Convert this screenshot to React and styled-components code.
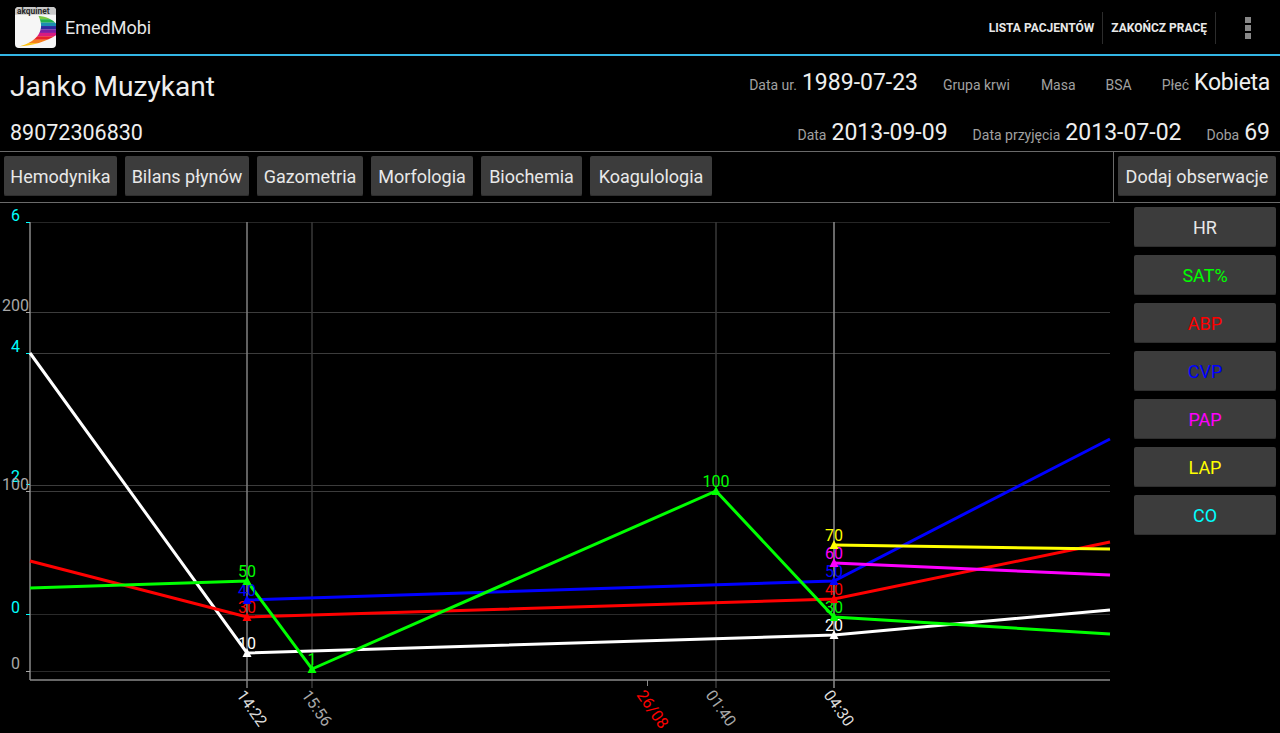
import styled, { createGlobalStyle } from "styled-components";

const GlobalStyle = createGlobalStyle`
  html, body { margin: 0; height: 100%; background: #000; }
  body { font-family: Roboto, "Liberation Sans", sans-serif; overflow: hidden; }
`;

const Page = styled.div`
  width: 1280px;
  height: 733px;
  display: flex;
  flex-direction: column;
  background: #000;
  color: #eee;
  overflow: hidden;
`;

const ActionBar = styled.header`
  height: 53px;
  flex: none;
  display: flex;
  align-items: center;
  border-bottom: 2px solid #33b5e5;
  padding: 1px 0 0 15px;
`;

const AppTitle = styled.span`
  font-size: 18px;
  color: #e8e8e8;
  margin-left: 9px;
  flex: 1;
`;

const ActionItem = styled.div`
  height: 32px;
  display: flex;
  align-items: center;
  padding: 0 8px;
  font-size: 12px;
  font-weight: 700;
  color: #e8e8e8;
  border-right: 1px solid #2c2c2c;
`;

const Overflow = styled.div`
  width: 64px;
  display: flex;
  flex-direction: column;
  align-items: center;
  gap: 2px;
  span { width: 6px; height: 6px; background: #888; }
`;

const Info = styled.section`
  height: 96px;
  flex: none;
  box-sizing: border-box;
  padding: 0 10px;
  display: grid;
  grid-template-rows: 60px 35px;
  border-bottom: 1px solid #6a6a6a;
`;

const InfoRow = styled.div`
  display: flex;
  justify-content: space-between;
  align-items: ${(p) => (p.$top ? "center" : "flex-start")};
`;

const Name = styled.h1`
  margin: 0;
  font-size: 28.1px;
  font-weight: 400;
  color: #eee;
`;

const Pesel = styled.div`
  font-size: 21.5px;
  color: #eee;
  line-height: 33px;
`;

const Fields = styled.div`
  display: flex;
  gap: ${(p) => p.$gap}px;
  align-items: baseline;
  margin-top: ${(p) => p.$shift}px;
`;

const Field = styled.div`
  font-size: 14px;
  color: #a0a0a0;
  margin-right: ${(p) => p.$after || 0}px;
`;

const Value = styled.span`
  font-size: 23px;
  color: #eee;
  margin-left: 5px;
  letter-spacing: ${(p) => (p.$word ? "-0.3px" : "0")};
`;

const TabRow = styled.nav`
  height: 51px;
  flex: none;
  box-sizing: border-box;
  display: flex;
  border-bottom: 1px solid #6a6a6a;
`;

const Tabs = styled.div`
  flex: 1;
  display: flex;
  align-items: flex-start;
  gap: 8px;
  padding: 4px 0 0 4px;
`;

const Btn = styled.button`
  height: 40px;
  width: ${(p) => p.$w}px;
  padding: 0;
  border: 0;
  border-radius: 2px;
  background: #3c3c3c;
  box-shadow: inset 0 -1px 0 #2e2e2e;
  font-family: inherit;
  font-size: 18px;
  color: ${(p) => p.$color || "#e8e8e8"};
`;

const AddCell = styled.div`
  width: 167px;
  box-sizing: border-box;
  border-left: 1px solid #6a6a6a;
  display: flex;
  align-items: flex-start;
  padding: 4px 0 0 4px;
`;

const Body = styled.main`
  flex: 1;
  display: flex;
  min-height: 0;
`;

const Chart = styled.svg`
  width: 1134px;
  height: 530px;
  flex: none;
  display: block;
  font-family: Roboto, "Liberation Sans", sans-serif;
`;

const Side = styled.aside`
  display: flex;
  flex-direction: column;
  gap: 8px;
  padding-top: 4px;
`;

const LEFT = 30;
const RIGHT = 1110;
const AXIS = 680;

const hLines = [
  { y: 222, c: "#262626" },
  { y: 312, c: "#3c3c3c" },
  { y: 353, c: "#3c3c3c" },
  { y: 485, c: "#3c3c3c" },
  { y: 491, c: "#3c3c3c" },
  { y: 614, c: "#2a2a2a" },
  { y: 671, c: "#2a2a2a" },
];

const vLines = [
  { x: 247, c: "#808080" },
  { x: 312, c: "#383838" },
  { x: 716, c: "#383838" },
  { x: 834, c: "#8c8c8c" },
];

const series = [
  { c: "#ffffff", pts: [[30, 353], [247, 653], [834, 635], [1110, 610]] },
  { c: "#ff0000", pts: [[30, 561], [247, 617], [834, 599], [1110, 542]] },
  { c: "#0000ff", pts: [[247, 600], [834, 581], [1110, 439]] },
  { c: "#00ff00", pts: [[30, 588], [247, 581], [312, 669], [716, 491], [834, 617], [1110, 634]] },
  { c: "#ff00ff", pts: [[834, 563], [1110, 575]] },
  { c: "#ffff00", pts: [[834, 545], [1110, 549]] },
];

const markers = [
  { x: 247, y: 653, c: "#ffffff", t: "10" },
  { x: 247, y: 617, c: "#ff0000", t: "30" },
  { x: 247, y: 600, c: "#0000ff", t: "40" },
  { x: 247, y: 581, c: "#00ff00", t: "50" },
  { x: 312, y: 669, c: "#00ff00", t: "1" },
  { x: 716, y: 491, c: "#00ff00", t: "100" },
  { x: 834, y: 635, c: "#ffffff", t: "20" },
  { x: 834, y: 617, c: "#00ff00", t: "30" },
  { x: 834, y: 599, c: "#ff0000", t: "40" },
  { x: 834, y: 581, c: "#0000ff", t: "50" },
  { x: 834, y: 563, c: "#ff00ff", t: "60" },
  { x: 834, y: 545, c: "#ffff00", t: "70" },
];

const yLabels = [
  { x: 11, y: 222, t: "6", c: "#00ffff", tick: 222 },
  { x: 2, y: 312, t: "200", c: "#a8a8a8", tick: 312 },
  { x: 11, y: 353, t: "4", c: "#00ffff", tick: 353 },
  { x: 11, y: 483, t: "2", c: "#00ffff", tick: 484 },
  { x: 2, y: 491, t: "100", c: "#a8a8a8", tick: 491 },
  { x: 11, y: 614, t: "0", c: "#00ffff", tick: 614 },
  { x: 11, y: 670, t: "0", c: "#a8a8a8", tick: 671 },
];

const xLabels = [
  { x: 247, t: "14:22", c: "#dcdcdc" },
  { x: 312, t: "15:56", c: "#a8a8a8" },
  { x: 647, t: "26/08", c: "#ff0000" },
  { x: 716, t: "01:40", c: "#a8a8a8" },
  { x: 834, t: "04:30", c: "#dcdcdc" },
];

const sideButtons = [
  { t: "HR", c: "#e8e8e8" },
  { t: "SAT%", c: "#00ff00" },
  { t: "ABP", c: "#ff0000" },
  { t: "CVP", c: "#0000ff" },
  { t: "PAP", c: "#ff00ff" },
  { t: "LAP", c: "#ffff00" },
  { t: "CO", c: "#00ffff" },
];

const tabs = [
  ["Hemodynika", 113],
  ["Bilans płynów", 124],
  ["Gazometria", 106],
  ["Morfologia", 102],
  ["Biochemia", 101],
  ["Koagulologia", 122],
];

const stripes = ["#7ac943", "#22b14c", "#1b8fb0", "#2e2a9e", "#7b1fa2", "#d81b80", "#e8202a", "#f7801e", "#ffc20e"];

const Logo = () => (
  <svg width="41" height="41" viewBox="0 0 42 42">
    <defs>
      <clipPath id="sail">
        <path d="M24 9 C32 10 39 13 42 17 L42 29 C32 35 18 40 4 40.5 C18 37 33 27 24 9 Z" />
      </clipPath>
    </defs>
    <rect width="42" height="42" rx="4" fill="#f6f6f6" />
    <path d="M0 8 V4 a4 4 0 0 1 4 -4 H38 a4 4 0 0 1 4 4 V8 Z" fill="#c8c8c8" />
    <text x="2" y="7" fontSize="8.6" fontWeight="700" fill="#2a2a2a" fontFamily="Roboto, sans-serif">akquinet</text>
    <g clipPath="url(#sail)">
      {stripes.map((c, i) => (
        <rect key={c} x="0" y={9 + i * 3.5} width="42" height="3.6" fill={c} />
      ))}
    </g>
  </svg>
);

const App = () => {
  return (
    <Page>
      <GlobalStyle />
      <ActionBar>
        <Logo />
        <AppTitle>EmedMobi</AppTitle>
        <ActionItem>LISTA PACJENTÓW</ActionItem>
        <ActionItem>ZAKOŃCZ PRACĘ</ActionItem>
        <Overflow><span /><span /><span /></Overflow>
      </ActionBar>

      <Info>
        <InfoRow $top>
          <Name>Janko Muzykant</Name>
          <Fields $gap={30} $shift={-8}>
            <Field $after={-5}>Data ur.<Value>1989-07-23</Value></Field>
            <Field $after={1}>Grupa krwi</Field>
            <Field>Masa</Field>
            <Field>BSA</Field>
            <Field>Płeć<Value $word>Kobieta</Value></Field>
          </Fields>
        </InfoRow>
        <InfoRow>
          <Pesel>89072306830</Pesel>
          <Fields $gap={25} $shift={3}>
            <Field>Data<Value>2013-09-09</Value></Field>
            <Field>Data przyjęcia<Value>2013-07-02</Value></Field>
            <Field>Doba<Value>69</Value></Field>
          </Fields>
        </InfoRow>
      </Info>

      <TabRow>
        <Tabs>
          {tabs.map(([t, w]) => <Btn key={t} $w={w}>{t}</Btn>)}
        </Tabs>
        <AddCell><Btn $w={158}>Dodaj obserwacje</Btn></AddCell>
      </TabRow>

      <Body>
        <Chart viewBox="0 203 1134 530">
          {hLines.map((l) => (
            <line key={l.y} x1={LEFT} x2={RIGHT} y1={l.y + 0.5} y2={l.y + 0.5} stroke={l.c} />
          ))}
          {vLines.map((l) => (
            <line key={l.x} x1={l.x} x2={l.x} y1={222} y2={AXIS + 8} stroke={l.c} strokeWidth="1.5" />
          ))}
          <line x1={LEFT} x2={LEFT} y1={222} y2={AXIS} stroke="#8a8a8a" strokeWidth="1.5" />
          <line x1={LEFT} x2={RIGHT} y1={AXIS} y2={AXIS} stroke="#8a8a8a" strokeWidth="1.5" />
          <line x1={647.5} x2={647.5} y1={AXIS} y2={AXIS + 6} stroke="#8a8a8a" />

          {yLabels.map((l) => (
            <g key={l.t + l.y}>
              <text x={l.x} y={l.y} fontSize="16" fill={l.c} dy="-1">{l.t}</text>
              <line x1={26} x2={30} y1={l.tick + 0.5} y2={l.tick + 0.5} stroke={l.c} />
            </g>
          ))}

          {series.map((s) => (
            <polyline
              key={s.c}
              points={s.pts.map((p) => p.join(",")).join(" ")}
              fill="none"
              stroke={s.c}
              strokeWidth="3"
            />
          ))}

          {markers.map((m) => (
            <g key={`${m.x}-${m.y}`}>
              <path d={`M${m.x} ${m.y - 5} l4.5 9 h-9 z`} fill={m.c} />
              <text x={m.x} y={m.y - 4} fontSize="16" fill={m.c} textAnchor="middle">{m.t}</text>
            </g>
          ))}

          {xLabels.map((l) => (
            <text
              key={l.t}
              x={l.x - 11}
              y={AXIS + 15}
              fontSize="16"
              fill={l.c}
              transform={`rotate(55 ${l.x - 11} ${AXIS + 15})`}
            >
              {l.t}
            </text>
          ))}
        </Chart>
        <Side>
          {sideButtons.map((b) => <Btn key={b.t} $w={142} $color={b.c}>{b.t}</Btn>)}
        </Side>
      </Body>
    </Page>
  );
};

export default App;
